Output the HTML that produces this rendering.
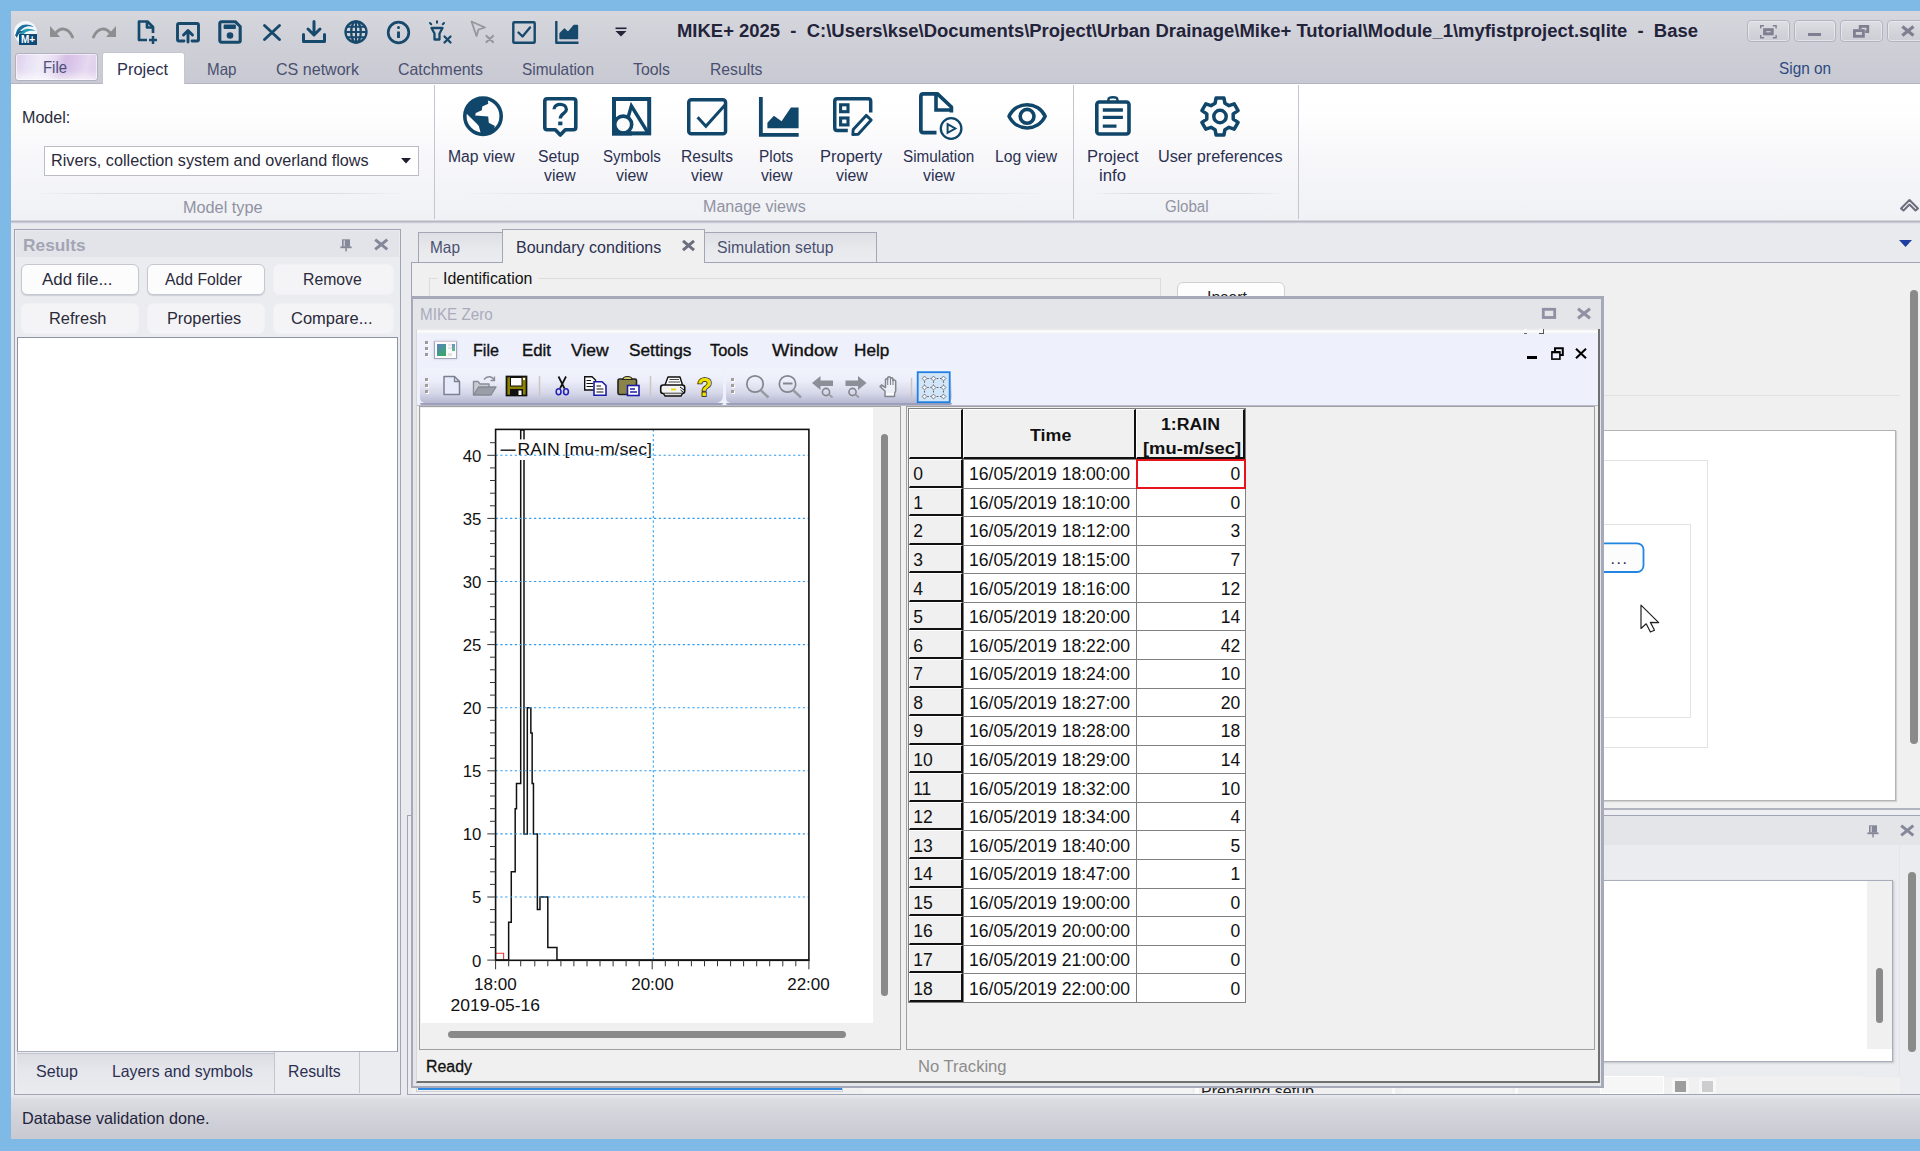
<!DOCTYPE html>
<html>
<head>
<meta charset="utf-8">
<title>MIKE+ 2025</title>
<style>
*{box-sizing:border-box;margin:0;padding:0}
html,body{width:1920px;height:1151px;overflow:hidden}
body{background:#e9eaee;font-family:"Liberation Sans",sans-serif;font-size:16px;color:#2b2b3a;position:relative}
.a{position:absolute}
.t{position:absolute;white-space:nowrap;line-height:1}
svg{position:absolute;overflow:visible}
#titlebar{left:11px;top:11px;width:1909px;height:73px;background:linear-gradient(#d6d7dd 0%,#cfd0d7 45%,#c8c9d2 100%)}
#ribbon{left:11px;top:84px;width:1909px;height:136px;background:linear-gradient(#ffffff 0%,#fefefe 22%,#f7f7fa 55%,#f0f1f5 100%)}
.rtab{color:#4a5070;font-size:16px}
.rlab{font-size:16px;color:#2b3050;text-align:center;line-height:20px;transform:translateX(-50%)}
.rgl{font-size:16px;color:#9092a2;transform:translateX(-50%)}
.btn{position:absolute;height:31px;border:1px solid #c6c8d1;border-radius:6px;background:#fcfcfd;font-size:16px;color:#2a2a3a;text-align:center;line-height:29px;white-space:nowrap;box-shadow:0 1px 1px rgba(120,120,140,.25)}
.btn.dis{border-color:#f1f1f4;background:#f4f4f7;color:#3a3a4a;box-shadow:none}
</style>
</head>
<body>
<div id="titlebar" class="a"></div>
<!-- logo -->
<svg style="left:14px;top:21px" width="24" height="24" viewBox="0 0 24 24">
  <circle cx="11.5" cy="11.5" r="11.5" fill="#f4f7fa"/>
  <path d="M2 12 C4 4 12 1 20 6 C14 4 8 6 5 12 Z" fill="#1b6fa0"/>
  <path d="M5 14 C8 7 15 6 22 10 C16 9 11 10 8 15 Z" fill="#2a9db5"/>
  <path d="M1 14 C3 10 7 9 10 11 C6 11 4 13 3 17 Z" fill="#155c8a"/>
  <rect x="5" y="13" width="18" height="11" fill="#0d4a78"/>
  <text x="14" y="22" font-family="Liberation Sans" font-weight="bold" font-size="10" fill="#fff" text-anchor="middle">M+</text>
</svg>
<!-- undo / redo -->
<svg style="left:50px;top:25px" width="24" height="14" viewBox="0 0 24 14">
  <path d="M0 1 L0 12 L10 12 Z" fill="#8e8e90"/>
  <path d="M5 9 C10 2 18 2 22.5 12" fill="none" stroke="#8e8e90" stroke-width="3" stroke-linecap="round"/>
</svg>
<svg style="left:92px;top:25px" width="24" height="14" viewBox="0 0 24 14">
  <path d="M24 1 L24 12 L14 12 Z" fill="#8e8e90"/>
  <path d="M19 9 C14 2 6 2 1.5 12" fill="none" stroke="#8e8e90" stroke-width="3" stroke-linecap="round"/>
</svg>
<!-- new doc -->
<svg style="left:137px;top:20px" width="22" height="24" viewBox="0 0 22 24" fill="none" stroke="#17496c" stroke-width="2.7" stroke-linejoin="round">
  <path d="M10 20 L2 20 L2 1.5 L10.5 1.5 L16 7 L16 13"/>
  <path d="M10 1.5 L10 7.5 L16 7.5"/>
  <path d="M16 16 L16 24 M12 20 L20 20" stroke-width="2.5"/>
</svg>
<!-- open -->
<svg style="left:176px;top:22px" width="24" height="21" viewBox="0 0 24 21" fill="none" stroke="#17496c" stroke-width="2.9" stroke-linejoin="round" stroke-linecap="round">
  <path d="M8 19 L3 19 Q1.5 19 1.5 17.5 L1.5 3 Q1.5 1.5 3 1.5 L21 1.5 Q22.5 1.5 22.5 3 L22.5 17.5 Q22.5 19 21 19 L16 19"/>
  <path d="M12 20 L12 9 M7.5 13 L12 8.5 L16.5 13"/>
</svg>
<!-- save -->
<svg style="left:218px;top:20px" width="24" height="24" viewBox="0 0 24 24" fill="none" stroke="#17496c" stroke-width="3.1" stroke-linejoin="round">
  <path d="M3 1.8 L17.5 1.8 L22.2 6.5 L22.2 20.5 Q22.2 22.2 20.5 22.2 L3.5 22.2 Q1.8 22.2 1.8 20.5 L1.8 3.5 Q1.8 1.8 3.5 1.8 Z"/>
  <rect x="6.5" y="5.5" width="10.5" height="2.6" fill="#17496c" stroke-width="1.8"/>
  <circle cx="12" cy="15.5" r="3.3" fill="#17496c" stroke="none"/>
</svg>
<!-- X -->
<svg style="left:263px;top:24px" width="18" height="17" viewBox="0 0 18 17" fill="none" stroke="#17496c" stroke-width="2.9" stroke-linecap="round">
  <path d="M1.5 1.5 L16.5 15.5 M16.5 1.5 L1.5 15.5"/>
</svg>
<!-- download -->
<svg style="left:302px;top:20px" width="24" height="23" viewBox="0 0 24 23" fill="none" stroke="#17496c" stroke-width="3.0" stroke-linecap="round" stroke-linejoin="round">
  <path d="M12 1.5 L12 14 M6 9 L12 15 L18 9"/>
  <path d="M1.5 14.5 L1.5 21.5 L22.5 21.5 L22.5 14.5"/>
</svg>
<!-- globe -->
<svg style="left:344px;top:20px" width="24" height="24" viewBox="0 0 24 24" fill="none" stroke="#17496c" stroke-width="2.3">
  <circle cx="12" cy="12" r="10.5"/>
  <ellipse cx="12" cy="12" rx="4.8" ry="10.5"/>
  <path d="M1.5 12 L22.5 12 M12 1.5 L12 22.5 M3 6.8 L21 6.8 M3 17.2 L21 17.2" stroke-width="2"/>
</svg>
<!-- info -->
<svg style="left:387px;top:21px" width="24" height="24" viewBox="0 0 24 24" fill="none" stroke="#17496c" stroke-width="2.7">
  <circle cx="11.5" cy="11.5" r="10.3"/>
  <path d="M11.5 10.5 L11.5 17" stroke-width="2.9"/>
  <circle cx="11.5" cy="6.6" r="1.5" fill="#17496c" stroke="none"/>
</svg>
<!-- highlight x -->
<svg style="left:428px;top:20px" width="25" height="24" viewBox="0 0 25 24" fill="none" stroke="#17496c" stroke-width="2.3" stroke-linecap="round" stroke-linejoin="round">
  <path d="M3.5 8 L14.5 8 L11.5 13.5 L11.5 19.5 L6.5 19.5 L6.5 13.5 Z"/>
  <path d="M9 1.2 L9 2.8 M2 3 L3.2 4.2 M16 3 L14.8 4.2" stroke-width="2.1"/>
  <path d="M16.5 16.5 L22.5 22.5 M22.5 16.5 L16.5 22.5" stroke-width="2.3"/>
</svg>
<!-- cursor x grey -->
<svg style="left:470px;top:20px" width="25" height="24" viewBox="0 0 25 24" fill="none" stroke="#96979d" stroke-width="1.8" stroke-linecap="round" stroke-linejoin="round">
  <path d="M1.5 1.5 L15 7.5 L8.5 9.5 L6.5 16 Z"/>
  <path d="M16.5 16 L23 22 M23 16 L16.5 22" stroke-width="2.2"/>
</svg>
<!-- check -->
<svg style="left:512px;top:21px" width="24" height="23" viewBox="0 0 24 23" fill="none" stroke="#17496c" stroke-width="2.4" stroke-linejoin="round" stroke-linecap="round">
  <rect x="1.3" y="1.3" width="21.4" height="20.4" rx="1"/>
  <path d="M6.5 11.5 L10.5 15.5 L18 6.5"/>
</svg>
<!-- chart -->
<svg style="left:555px;top:21px" width="24" height="23" viewBox="0 0 24 23" fill="none" stroke="#17496c" stroke-width="2.4" stroke-linejoin="round">
  <path d="M1.3 0 L1.3 21.7 L23.5 21.7"/>
  <path d="M5 17.5 L5 12.5 L9.5 8 L13 11.5 L19 4.5 L22.5 4.5 L22.5 17.5 Z" fill="#17496c" stroke-width="1.3"/>
</svg>
<!-- qat dropdown -->
<svg style="left:615px;top:27px" width="12" height="10" viewBox="0 0 12 10">
  <rect x="0.5" y="0.5" width="11" height="1.6" fill="#23233a"/>
  <path d="M0.5 4 L11.5 4 L6 9.5 Z" fill="#23233a"/>
</svg>
<!-- window buttons -->
<div class="a" style="left:1747px;top:20px;width:42.5px;height:22px;border:1px solid #b2b4c0;border-radius:4px;background:linear-gradient(#dedfe4,#d3d4da 55%,#cdced5);box-shadow:inset 0 0 0 1px rgba(235,236,240,.7)"></div>
<div class="a" style="left:1793.5px;top:20px;width:42.5px;height:22px;border:1px solid #b2b4c0;border-radius:4px;background:linear-gradient(#dedfe4,#d3d4da 55%,#cdced5);box-shadow:inset 0 0 0 1px rgba(235,236,240,.7)"></div>
<div class="a" style="left:1840px;top:20px;width:42.5px;height:22px;border:1px solid #b2b4c0;border-radius:4px;background:linear-gradient(#dedfe4,#d3d4da 55%,#cdced5);box-shadow:inset 0 0 0 1px rgba(235,236,240,.7)"></div>
<div class="a" style="left:1886.5px;top:20px;width:42.5px;height:22px;border:1px solid #b2b4c0;border-radius:4px;background:linear-gradient(#dedfe4,#d3d4da 55%,#cdced5);box-shadow:inset 0 0 0 1px rgba(235,236,240,.7)"></div>
<svg style="left:1759.9px;top:24.5px" width="16.8" height="13.5" viewBox="0 0 16.8 13.5" fill="none" stroke="#7e8092">
  <rect x="4.6" y="4.7" width="7.6" height="4.1" stroke-width="3"/>
  <path d="M0.7 3.6 V0.7 H4 M12.8 0.7 H16.1 V3.6 M16.1 9.9 V12.8 H12.8 M4 12.8 H0.7 V9.9" stroke-width="1.4"/>
</svg>
<div class="a" style="left:1808px;top:33.2px;width:13.4px;height:3.2px;background:#7e8092"></div>
<svg style="left:1853.2px;top:25px" width="16.2" height="12.7" viewBox="0 0 16.2 12.7" fill="none" stroke="#7e8092" stroke-width="2.8">
  <path d="M7.2 4 V1.4 H14.8 V6.6 H12.2"/>
  <rect x="1.4" y="5.6" width="9" height="5.7"/>
</svg>
<svg style="left:1900.7px;top:26.1px" width="13.8" height="10.1" viewBox="0 0 13.8 10.1" fill="none" stroke="#7e8092" stroke-width="3.2">
  <path d="M1.3 0.5 L12.5 9.6 M12.5 0.5 L1.3 9.6"/>
</svg>
<!-- ribbon tabs -->
<div class="a" id="tabline" style="left:11px;top:83px;width:1909px;height:1px;background:#b3b5c1"></div>
<div class="a" style="left:15px;top:53px;width:83px;height:28px;border:1px solid #b1b2c0;border-radius:3px;background:linear-gradient(105deg,#dccdea 0%,#e7dff3 14%,#efebf8 30%,#e9e0f3 44%,#d6bfe7 58%,#dcc8ea 70%,#e6d9f0 84%,#d9c6e8 100%);box-shadow:inset 0 0 0 1px rgba(255,255,255,.55),inset 0 -7px 7px -2px rgba(255,255,255,.6)"></div>
<div class="a" style="left:102px;top:52px;width:83px;height:33px;background:#fff;border-radius:3px 3px 0 0;border:1px solid #c5c7d0;border-bottom:none"></div>
<div class="t" style="left:677.0px;top:22.9px;font-size:17.5px;transform:scaleX(1.0544);transform-origin:0 50%;font-weight:bold;color:#23233a">MIKE+ 2025&nbsp; -&nbsp; C:\Users\kse\Documents\Project\Urban Drainage\Mike+ Tutorial\Module_1\myfistproject.sqlite&nbsp; -&nbsp; Base</div>
<div class="t" style="left:42.5px;top:58.6px;font-size:16.5px;transform:scaleX(0.9025);transform-origin:0 50%;color:#4b4f78">File</div>
<div class="t" style="left:117.0px;top:61.0px;font-size:16.5px;transform:scaleX(0.9930);transform-origin:0 50%;color:#2c3050">Project</div>
<div class="t" style="left:207.0px;top:61.0px;font-size:16.5px;transform:scaleX(0.9187);transform-origin:0 50%;color:#4a5070">Map</div>
<div class="t" style="left:275.8px;top:61.0px;font-size:16.5px;transform:scaleX(0.9733);transform-origin:0 50%;color:#4a5070">CS network</div>
<div class="t" style="left:397.5px;top:61.0px;font-size:16.5px;transform:scaleX(0.9654);transform-origin:0 50%;color:#4a5070">Catchments</div>
<div class="t" style="left:522.0px;top:61.0px;font-size:16.5px;transform:scaleX(0.9345);transform-origin:0 50%;color:#4a5070">Simulation</div>
<div class="t" style="left:633.0px;top:61.0px;font-size:16.5px;transform:scaleX(0.9603);transform-origin:0 50%;color:#4a5070">Tools</div>
<div class="t" style="left:709.5px;top:61.0px;font-size:16.5px;transform:scaleX(0.9540);transform-origin:0 50%;color:#4a5070">Results</div>
<div class="t" style="left:1779.0px;top:59.6px;font-size:16.5px;transform:scaleX(0.9291);transform-origin:0 50%;color:#2c4a80">Sign on</div>
<div id="ribbon" class="a"></div>
<div class="a" style="left:11px;top:219.5px;width:1909px;height:4px;background:linear-gradient(#f6f6f9 0%,#abaebb 28%,#c3c5cf 55%,#e2e3e8 85%,#e9eaee 100%)"></div>
<div class="a" style="left:44px;top:146px;width:375px;height:30px;background:#fff;border:1px solid #babcc7"></div>
<svg style="left:401px;top:158px" width="10" height="6" viewBox="0 0 10 6"><path d="M0 0 L10 0 L5 5.5 Z" fill="#1e1e2e"/></svg>
<div class="a" style="left:30px;top:193px;width:380px;height:1px;background:linear-gradient(90deg,rgba(215,217,224,0),#dcdde4 20%,#dcdde4 80%,rgba(215,217,224,0))"></div>
<div class="a" style="left:455px;top:193px;width:600px;height:1px;background:linear-gradient(90deg,rgba(215,217,224,0),#dcdde4 20%,#dcdde4 80%,rgba(215,217,224,0))"></div>
<div class="a" style="left:1090px;top:193px;width:195px;height:1px;background:linear-gradient(90deg,rgba(215,217,224,0),#dcdde4 20%,#dcdde4 80%,rgba(215,217,224,0))"></div>
<div class="a" style="left:434px;top:85px;width:1px;height:134px;background:#c3c5cf"></div>
<div class="a" style="left:1073px;top:85px;width:1px;height:134px;background:#c3c5cf"></div>
<div class="a" style="left:1298px;top:85px;width:1px;height:134px;background:#c3c5cf"></div>
<!-- ribbon icons -->
<!-- map view globe -->
<svg style="left:462.5px;top:96px" width="40" height="40.5" viewBox="0 0 40 40.5">
  <defs><clipPath id="gc"><circle cx="20" cy="20.2" r="17.5"/></clipPath></defs>
  <circle cx="20" cy="20.2" r="18.2" fill="#fdfdfe" stroke="#10466a" stroke-width="3.6"/>
  <path clip-path="url(#gc)" d="M24.3 0 L25.3 7.7 L19.3 10.4 L18.8 14.2 L12.8 17 L12.2 19.6 L25.2 20.4 L25.8 26.8 L31.9 30.1 L30.1 36.5 L26 41 L19.3 41 L17.4 36.1 L15.8 30.1 L14.1 27.9 L4.2 18.2 L0 17.5 L0 0 Z" fill="#10466a"/>
</svg>
<!-- setup view -->
<svg style="left:543.4px;top:96.6px" width="34.6" height="40.4" viewBox="0 0 34.6 40.4" fill="none" stroke="#10466a" stroke-width="3.6" stroke-linejoin="round">
  <path d="M4.3 1.8 L30.3 1.8 Q32.8 1.8 32.8 4.3 L32.8 30.2 Q32.8 32.7 30.3 32.7 L22.3 32.7 L17.3 38 L12.3 32.7 L4.3 32.7 Q1.8 32.7 1.8 30.2 L1.8 4.3 Q1.8 1.8 4.3 1.8 Z"/>
  <path d="M11 12.2 C11 5.8 23.4 5.8 23.4 12.4 C23.4 16.4 17.3 16.6 17.3 21.6" stroke-width="3.3" stroke-linecap="butt"/>
  <rect x="15.2" y="24.6" width="4.2" height="3.7" fill="#10466a" stroke="none"/>
</svg>
<!-- symbols view -->
<svg style="left:612.3px;top:96.8px" width="39.2" height="38.4" viewBox="0 0 39.2 38.4" fill="none" stroke="#10466a" stroke-width="4" stroke-linejoin="miter">
  <rect x="2" y="2" width="35.2" height="34.4"/>
  <path d="M12.5 33 L19.4 9 L35.5 35" stroke-width="3.4" stroke-linejoin="miter"/>
  <circle cx="11.2" cy="27.6" r="8.5" fill="#fbfbfc" stroke-width="3.6"/>
  <path d="M2 17 V36.4 H20" stroke-width="4"/>
</svg>
<!-- results view -->
<svg style="left:687.4px;top:97.9px" width="40.3" height="37.6" viewBox="0 0 40.3 37.6" fill="none" stroke="#10466a" stroke-width="3.5" stroke-linejoin="round">
  <rect x="1.75" y="1.75" width="36.8" height="34.1" rx="2.6"/>
  <path d="M10.6 19.2 L18.9 28.2 L38 6.9" stroke-width="3" stroke-linejoin="miter"/>
</svg>
<!-- plots view -->
<svg style="left:758.6px;top:96.6px" width="39.7" height="40" viewBox="0 0 39.7 40" fill="none" stroke="#10466a">
  <path d="M1.85 0 L1.85 37.9 L39.7 37.9" stroke-width="3.8"/>
  <path d="M8.4 31.3 L8.4 25.8 L14.9 18.7 L22.6 24.2 L31.9 10.4 L39.6 10.4 L39.6 31.3 Z" fill="#10466a" stroke="none"/>
</svg>
<!-- property view -->
<svg style="left:833.2px;top:96.8px" width="40" height="40" viewBox="0 0 40 40" fill="none" stroke="#10466a" stroke-width="3.5" stroke-linejoin="round">
  <path d="M14.8 33.5 L4.3 33.5 Q1.75 33.5 1.75 31 L1.75 4.3 Q1.75 1.75 4.3 1.75 L35.2 1.75 Q37.7 1.75 37.7 4.3 L37.7 15.6" stroke-linecap="butt"/>
  <rect x="7.6" y="7.8" width="7.4" height="6.9" stroke-width="3.1" stroke-linejoin="miter"/>
  <rect x="7.6" y="21" width="7.4" height="6.9" stroke-width="3.1" stroke-linejoin="miter"/>
  <path d="M19.8 37.6 L20.2 32.6 L33.2 18.4 L38.2 23 L25.2 37.2 Z" stroke-width="2.9"/>
</svg>
<!-- simulation view -->
<svg style="left:918.6px;top:92px" width="45" height="48" viewBox="0 0 45 48" fill="none" stroke="#10466a" stroke-width="3.7" stroke-linejoin="round">
  <path d="M17.5 40.6 L4.4 40.6 Q1.85 40.6 1.85 38 L1.85 4.4 Q1.85 1.85 4.4 1.85 L18.5 1.85 L32.4 15 L32.4 20.5" stroke-linecap="butt"/>
  <path d="M17 1.85 L17 18 L33 18" stroke-width="3.6" stroke-linejoin="miter"/>
  <circle cx="32.1" cy="36.5" r="10.3" stroke-width="2.3"/>
  <path d="M28.6 32.2 L36.3 36.5 L28.6 40.8 Z" stroke-width="2" stroke-linejoin="miter"/>
</svg>
<!-- log view eye -->
<svg style="left:1007.2px;top:102.6px" width="40.2" height="26.6" viewBox="0 0 40.2 26.6" fill="none" stroke="#10466a" stroke-width="3.5">
  <path d="M2 13.3 C9.5 -2.2 30.7 -2.2 38.2 13.3 C30.7 28.8 9.5 28.8 2 13.3 Z" stroke-linejoin="round"/>
  <circle cx="20.1" cy="13.3" r="6.9" stroke-width="3.6"/>
</svg>
<!-- project info clipboard -->
<svg style="left:1095.4px;top:96.2px" width="35.8" height="39.8" viewBox="0 0 35.8 39.8" fill="none" stroke="#10466a" stroke-width="3.6" stroke-linejoin="round">
  <rect x="1.8" y="6" width="32.2" height="32" rx="2.6"/>
  <path d="M13.4 6 L13.4 3.4 Q13.4 1.2 17.9 1.2 Q22.4 1.2 22.4 3.4 L22.4 6" stroke-width="2.4"/>
  <path d="M7.8 14 L27.9 14 M7.8 21.3 L27.9 21.3 M7.8 30.1 L21.5 30.1" stroke-width="3.3" stroke-linecap="butt"/>
</svg>
<!-- gear -->
<svg style="left:1200.1px;top:95.8px" width="40" height="41" viewBox="-20 -20.5 40 41" fill="none" stroke="#10466a" stroke-width="3.5" stroke-linejoin="round">
  <path d="M-3.9 -18.6 L3.9 -18.6 L4.9 -13.2 L9 -10.8 L14.2 -12.6 L18.1 -5.9 L13.2 -2.6 L13.2 2.6 L18.1 5.9 L14.2 12.6 L9 10.8 L4.9 13.2 L3.9 18.6 L-3.9 18.6 L-4.9 13.2 L-9 10.8 L-14.2 12.6 L-18.1 5.9 L-13.2 2.6 L-13.2 -2.6 L-18.1 -5.9 L-14.2 -12.6 L-9 -10.8 L-4.9 -13.2 Z"/>
  <circle cx="0" cy="0" r="6.2" stroke-width="3.5"/>
</svg>
<!-- collapse chevron -->
<svg style="left:1900px;top:198px" width="20" height="14" viewBox="0 0 20 14" fill="none" stroke="#6b6d7c" stroke-width="2" stroke-linejoin="round">
  <path d="M1 10.5 L9.5 2 L18 10.5 L15.5 12.5 L9.5 6.5 L3.5 12.5 Z"/>
</svg>
<div class="t" style="left:21.7px;top:109.8px;font-size:16px;transform:scaleX(1.0056);transform-origin:0 50%;color:#2a2a3a">Model:</div>
<div class="t" style="left:50.7px;top:153.2px;font-size:16px;transform:scaleX(1.0118);transform-origin:0 50%;color:#2a2a3a">Rivers, collection system and overland flows</div>
<div class="t" style="left:182.5px;top:199.5px;font-size:16px;transform:scaleX(1.0158);transform-origin:0 50%;color:#9092a2">Model type</div>
<div class="t" style="left:702.7px;top:198.8px;font-size:16px;transform:scaleX(1.0041);transform-origin:0 50%;color:#9092a2">Manage views</div>
<div class="t" style="left:1165.4px;top:198.8px;font-size:16px;transform:scaleX(0.9427);transform-origin:0 50%;color:#9092a2">Global</div>
<div class="t" style="left:448.3px;top:148.7px;font-size:16px;transform:scaleX(0.9840);transform-origin:0 50%;color:#2b3050">Map view</div>
<div class="t" style="left:538.3px;top:148.7px;font-size:16px;transform:scaleX(0.9854);transform-origin:0 50%;color:#2b3050">Setup</div>
<div class="t" style="left:543.7px;top:167.7px;font-size:16px;transform:scaleX(0.9870);transform-origin:0 50%;color:#2b3050">view</div>
<div class="t" style="left:603.0px;top:148.7px;font-size:16px;transform:scaleX(0.9420);transform-origin:0 50%;color:#2b3050">Symbols</div>
<div class="t" style="left:615.6px;top:167.7px;font-size:16px;transform:scaleX(0.9901);transform-origin:0 50%;color:#2b3050">view</div>
<div class="t" style="left:680.8px;top:148.7px;font-size:16px;transform:scaleX(0.9745);transform-origin:0 50%;color:#2b3050">Results</div>
<div class="t" style="left:690.6px;top:167.7px;font-size:16px;transform:scaleX(0.9870);transform-origin:0 50%;color:#2b3050">view</div>
<div class="t" style="left:758.6px;top:148.7px;font-size:16px;transform:scaleX(0.9613);transform-origin:0 50%;color:#2b3050">Plots</div>
<div class="t" style="left:761.0px;top:167.7px;font-size:16px;transform:scaleX(0.9839);transform-origin:0 50%;color:#2b3050">view</div>
<div class="t" style="left:820.3px;top:148.7px;font-size:16px;transform:scaleX(1.0303);transform-origin:0 50%;color:#2b3050">Property</div>
<div class="t" style="left:836.0px;top:167.7px;font-size:16px;transform:scaleX(0.9901);transform-origin:0 50%;color:#2b3050">view</div>
<div class="t" style="left:903.0px;top:148.7px;font-size:16px;transform:scaleX(0.9531);transform-origin:0 50%;color:#2b3050">Simulation</div>
<div class="t" style="left:923.2px;top:167.7px;font-size:16px;transform:scaleX(0.9933);transform-origin:0 50%;color:#2b3050">view</div>
<div class="t" style="left:994.5px;top:148.7px;font-size:16px;transform:scaleX(0.9817);transform-origin:0 50%;color:#2b3050">Log view</div>
<div class="t" style="left:1087.0px;top:148.7px;font-size:16px;transform:scaleX(1.0362);transform-origin:0 50%;color:#2b3050">Project</div>
<div class="t" style="left:1098.8px;top:167.7px;font-size:16px;transform:scaleX(1.0466);transform-origin:0 50%;color:#2b3050">info</div>
<div class="t" style="left:1157.5px;top:148.7px;font-size:16px;transform:scaleX(1.0145);transform-origin:0 50%;color:#2b3050">User preferences</div>
<!-- left Results panel -->
<div class="a" style="left:14px;top:229px;width:387px;height:866px;border:1px solid #a1a4b4;background:#ebecf0"></div>
<div class="a" style="left:16px;top:231px;width:383px;height:26px;background:#e3e4e9"></div>
<!-- pin -->
<svg style="left:340.4px;top:238.5px" width="12" height="13" viewBox="0 0 12 13" fill="#858899">
  <rect x="2" y="0.3" width="8" height="7.4"/><rect x="3.6" y="1.3" width="1.2" height="6" fill="#d9dae0"/><rect x="0.4" y="7.4" width="11.2" height="1.8"/><rect x="5.3" y="9" width="1.5" height="3.4"/>
</svg>
<svg style="left:373.5px;top:238.5px" width="14.5" height="11" viewBox="0 0 14.5 11" fill="none" stroke="#858899" stroke-width="3"><path d="M1.2 0.6 L13.3 10.4 M13.3 0.6 L1.2 10.4"/></svg>
<div class="btn" style="left:21px;top:264px;width:118px"></div>
<div class="btn" style="left:147px;top:264px;width:118px"></div>
<div class="btn dis" style="left:273px;top:264px;width:121px"></div>
<div class="btn dis" style="left:21px;top:303px;width:118px"></div>
<div class="btn dis" style="left:147px;top:303px;width:118px"></div>
<div class="btn dis" style="left:273px;top:303px;width:121px"></div>
<div class="a" style="left:17px;top:337px;width:381px;height:715px;background:#fff;border:1px solid #8f92a3;border-bottom-color:#a9acba"></div>
<!-- bottom tabs -->
<div class="a" style="left:17px;top:1053px;width:258px;height:40px;background:linear-gradient(#dcdde3,#e6e7ec 45%,#eaebef);border-top:1px solid #c2c4ce"></div>
<div class="a" style="left:274px;top:1052px;width:86px;height:41px;background:#ecedf1;border-left:1px solid #c2c4ce;border-right:1px solid #c2c4ce"></div>
<!-- status bar -->
<div class="a" style="left:11px;top:1095px;width:1909px;height:5px;background:linear-gradient(#e8e9ed,#e2e3e8 60%,#d2d3da)"></div>
<div class="a" style="left:11px;top:1099px;width:1909px;height:39.5px;background:linear-gradient(#dcdde2,#d1d2d9 50%,#c8c9d1)"></div>
<div class="t" style="left:23.2px;top:236.7px;font-size:16.5px;transform:scaleX(1.0502);transform-origin:0 50%;font-weight:bold;color:#a3a5b5">Results</div>
<div class="t" style="left:42.0px;top:271.0px;font-size:16.5px;transform:scaleX(1.0248);transform-origin:0 50%;color:#2a2a3a">Add file...</div>
<div class="t" style="left:165.0px;top:271.0px;font-size:16.5px;transform:scaleX(0.9539);transform-origin:0 50%;color:#2a2a3a">Add Folder</div>
<div class="t" style="left:302.5px;top:271.0px;font-size:16.5px;transform:scaleX(0.9552);transform-origin:0 50%;color:#2a2a3a">Remove</div>
<div class="t" style="left:48.7px;top:310.2px;font-size:16.5px;transform:scaleX(0.9951);transform-origin:0 50%;color:#2a2a3a">Refresh</div>
<div class="t" style="left:167.0px;top:310.2px;font-size:16.5px;transform:scaleX(0.9867);transform-origin:0 50%;color:#2a2a3a">Properties</div>
<div class="t" style="left:290.5px;top:310.2px;font-size:16.5px;transform:scaleX(0.9985);transform-origin:0 50%;color:#2a2a3a">Compare...</div>
<div class="t" style="left:35.5px;top:1063.4px;font-size:16.5px;transform:scaleX(0.9739);transform-origin:0 50%;color:#2c3050">Setup</div>
<div class="t" style="left:112.3px;top:1063.4px;font-size:16.5px;transform:scaleX(0.9601);transform-origin:0 50%;color:#2c3050">Layers and symbols</div>
<div class="t" style="left:287.6px;top:1063.4px;font-size:16.5px;transform:scaleX(0.9576);transform-origin:0 50%;color:#2c3050">Results</div>
<div class="t" style="left:22.2px;top:1110.4px;font-size:16.5px;transform:scaleX(0.9826);transform-origin:0 50%;color:#23233a">Database validation done.</div>
<!-- document tab strip + content panel (behind) -->
<div class="a" style="left:411px;top:262px;width:1509px;height:547px;background:#f0f0f0;border:1px solid #a1a4b4;border-right:none"></div>
<div class="a" style="left:407px;top:815px;width:1513px;height:280px;background:#ebecf0;border:1px solid #a1a4b4;border-right:none"></div>
<div class="a" style="left:418px;top:232px;width:85px;height:30px;border:1px solid #a3a6b5;border-bottom:none;background:linear-gradient(#dedfe4,#e9eaee 60%,#ebecef)"></div>
<div class="a" style="left:703px;top:232px;width:174px;height:30px;border:1px solid #a3a6b5;border-bottom:none;background:linear-gradient(#dedfe4,#e9eaee 60%,#ebecef)"></div>
<div class="a" style="left:502px;top:229px;width:203px;height:34px;border:1px solid #a3a6b5;border-bottom:none;background:#f0f0f0"></div>
<svg style="left:681.5px;top:240px" width="13" height="11" viewBox="0 0 13 11" fill="none" stroke="#6d6f80" stroke-width="3"><path d="M1 0.8 L12 10.2 M12 0.8 L1 10.2"/></svg>
<svg style="left:1899px;top:240px" width="13" height="7" viewBox="0 0 13 7"><path d="M0 0 L13 0 L6.5 7 Z" fill="#1f3fa0"/></svg>
<div class="t" style="left:430.0px;top:239.3px;font-size:16.5px;transform:scaleX(0.9343);transform-origin:0 50%;color:#4a5070">Map</div>
<div class="t" style="left:515.7px;top:238.7px;font-size:16.5px;transform:scaleX(0.9718);transform-origin:0 50%;color:#2c3050">Boundary conditions</div>
<div class="t" style="left:716.7px;top:239.3px;font-size:16.5px;transform:scaleX(0.9557);transform-origin:0 50%;color:#4a5070">Simulation setup</div>
<!-- identification groupbox -->
<div class="a" style="left:429px;top:278px;width:732px;height:30px;border:1px solid #dcdcdc;border-bottom:none"></div>
<div class="a" style="left:438px;top:270px;width:100px;height:18px;background:#f0f0f0"></div>
<div class="t" style="left:443.3px;top:270.0px;font-size:16.5px;transform:scaleX(0.9649);transform-origin:0 50%;color:#111">Identification</div>
<div class="a" style="left:1177px;top:282px;width:108px;height:30px;border:1px solid #d0d0d4;border-radius:6px;background:#fdfdfd"></div>
<div class="t" style="left:1207px;top:290px;font-size:16px;color:#222">Insert</div>
<!-- right side content (behind MZ) -->
<div class="a" style="left:1604px;top:395px;width:296px;height:1px;background:#e2e2e4"></div>
<div class="a" style="left:1500px;top:430px;width:396px;height:371px;background:#fff;border:1px solid #b4b4b8;box-shadow:1px 1px 1px rgba(0,0,0,.12)"></div>
<div class="a" style="left:1500px;top:460px;width:208px;height:288px;border:1px solid #e3e3e6"></div>
<div class="a" style="left:1500px;top:524px;width:191px;height:194px;border:1px solid #e3e3e6"></div>
<svg style="left:1550px;top:540px" width="100" height="36" viewBox="0 0 100 36"><rect x="5" y="3.3" width="88.5" height="28.7" rx="6.5" fill="#fcfcfd" stroke="#2285e0" stroke-width="1.8"/></svg>
<div class="t" style="left:1610.5px;top:550.5px;font-size:16px;color:#2a2a4a;letter-spacing:1.6px">...</div>
<!-- mouse cursor -->
<svg style="left:1640.2px;top:604px" width="21" height="31" viewBox="0 0 21 31"><path d="M1 1.1 L1 24.5 L6.2 19.8 L10.4 28 L14.5 26.2 L10.4 18.4 L18.7 18.6 Z" fill="#fff" stroke="#222" stroke-width="1.2" stroke-linejoin="round"/></svg>
<!-- right scrollbar of content -->
<div class="a" style="left:1909.5px;top:290px;width:8px;height:454px;border-radius:4px;background:#8a8a8a"></div>
<!-- splitter + bottom right panel -->
<div class="a" style="left:1500px;top:808px;width:420px;height:2px;background:#b1b3bf"></div>
<div class="a" style="left:1500px;top:810px;width:420px;height:5px;background:#eeeff2"></div>
<div class="a" style="left:1500px;top:816px;width:420px;height:29px;background:#e4e5e9"></div>
<svg style="left:1867.4px;top:824.5px" width="12" height="13" viewBox="0 0 12 13" fill="#858899">
  <rect x="2" y="0.3" width="8" height="7.4"/><rect x="3.6" y="1.3" width="1.2" height="6" fill="#d9dae0"/><rect x="0.4" y="7.4" width="11.2" height="1.8"/><rect x="5.3" y="9" width="1.5" height="3.4"/>
</svg>
<svg style="left:1900px;top:825px" width="14.5" height="11" viewBox="0 0 14.5 11" fill="none" stroke="#858899" stroke-width="3"><path d="M1.2 0.6 L13.3 10.4 M13.3 0.6 L1.2 10.4"/></svg>
<div class="a" style="left:1500px;top:880px;width:393px;height:182px;background:#fff;border:1px solid #a9acba;box-shadow:1px 1px 2px rgba(0,0,0,.18)"></div>
<div class="a" style="left:1867px;top:881px;width:25px;height:168px;background:#f0f0f0"></div>
<div class="a" style="left:1876px;top:968px;width:7px;height:55px;border-radius:3.5px;background:#8a8a8a"></div>
<div class="a" style="left:1908px;top:872px;width:8px;height:180px;border-radius:4px;background:#8a8a8a"></div>
<div class="a" style="left:1899px;top:846px;width:1px;height:248px;background:#e4e5ea"></div>
<!-- bottom strip below MZ -->
<div class="a" style="left:412px;top:1077px;width:1488px;height:17px;background:#f0f0f0"></div>
<div class="a" style="left:416px;top:1085px;width:427px;height:7px;background:#f1f1f3;border:1px solid #d0d0d4;border-top:none"></div>
<div class="a" style="left:418px;top:1088px;width:424px;height:2px;background:#2d89e0"></div>
<div class="a" style="left:862px;top:1086px;width:330px;height:8px;background:#f3f3f4"></div>
<div class="a" style="left:1195px;top:1079px;width:200px;height:14px;overflow:hidden"><div class="t" style="left:6px;top:4.5px;font-size:16px;color:#222">Preparing setup</div></div>
<div class="a" style="left:1195px;top:1086px;width:4px;height:8px;background:#fafafa"></div>
<div class="a" style="left:1392px;top:1086px;width:3px;height:8px;background:#fafafa"></div>
<div class="a" style="left:1402px;top:1086px;width:110px;height:8px;background:#f3f3f4"></div>
<div class="a" style="left:1515px;top:1086px;width:3px;height:8px;background:#fafafa"></div>
<div class="a" style="left:1600px;top:1076px;width:64px;height:18px;background:#f6f6f7;border:1px solid #fff"></div>
<div class="a" style="left:1672px;top:1078px;width:17px;height:16px;background:#f7f7f8;border-radius:3px"></div>
<div class="a" style="left:1675px;top:1081px;width:11px;height:11px;background:#9d9d9f"></div>
<div class="a" style="left:1699px;top:1078px;width:17px;height:16px;background:#f7f7f8;border-radius:3px"></div>
<div class="a" style="left:1702px;top:1081px;width:11px;height:11px;background:#cdcdcf"></div>
<div class="a" style="left:1721px;top:1076px;width:140px;height:18px;background:#f0f0f0"></div>
<style>
.mzm{font-size:16.5px;color:#111}
.th{background:#f0f0f0;border-top:1px solid #fff;border-left:1px solid #fff;border-right:2px solid #111;border-bottom:2px solid #111;font-weight:bold;font-size:17px;color:#111;text-align:center;white-space:nowrap}
.rn{background:#f0f0f0;border-top:1px solid #fff;border-left:1px solid #fff;border-right:2px solid #111;border-bottom:2px solid #111;font-size:17.5px;color:#111;padding-left:4px;white-space:nowrap}
.tc{background:#fff;font-size:17.5px;color:#111;white-space:nowrap}
</style>
<!-- MIKE Zero floating window -->
<div class="a" style="left:411px;top:296px;width:1193px;height:792px;background:#a6a9b8"></div>
<div class="a" style="left:413px;top:299px;width:1188px;height:787px;background:#e4e5e9"></div>
<div class="t" style="left:420.0px;top:306.3px;font-size:16.5px;transform:scaleX(0.9219);transform-origin:0 50%;color:#a9abbd">MIKE Zero</div>
<svg style="left:1542px;top:308px" width="14" height="11" viewBox="0 0 14 11" fill="none" stroke="#8f91a3" stroke-width="2.8"><rect x="1.3" y="1.3" width="11.4" height="8.2"/></svg>
<svg style="left:1577px;top:308px" width="14" height="11" viewBox="0 0 14 11" fill="none" stroke="#8f91a3" stroke-width="3"><path d="M1 0.8 L13 10.2 M13 0.8 L1 10.2"/></svg>
<div class="a" style="left:416px;top:329px;width:1184px;height:754px;background:#f0f0f0;border-right:2px solid #707070;border-bottom:2px solid #707070;border-left:1px solid #d8d8dc"></div>
<div class="a" style="left:417px;top:332px;width:1181px;height:74px;background:#eef0fb"></div>
<div class="a" style="left:417px;top:405px;width:1181px;height:1px;background:#b8bacb"></div>
<div class="a" style="left:417px;top:326px;width:1181px;height:8px;background:linear-gradient(#e3e4e8 0%,#e5e5e9 25%,#ebebed 45%,#ffffff 66%,#f4f4f7 85%,#eef0fb 100%)"></div>
<div class="a" style="left:1524px;top:328.5px;width:3px;height:5.5px;background:#fafafa;border-bottom:1px solid #666"></div>
<div class="a" style="left:1539px;top:328.5px;width:4.5px;height:5.5px;background:#fafafa;border-bottom:1px solid #555;border-right:1px solid #555"></div>
<div class="a" style="left:426px;top:342px;width:3px;height:3px;background:#fff"></div><div class="a" style="left:425px;top:341px;width:3px;height:3px;background:#9a9a9a"></div>
<div class="a" style="left:426px;top:348px;width:3px;height:3px;background:#fff"></div><div class="a" style="left:425px;top:347px;width:3px;height:3px;background:#9a9a9a"></div>
<div class="a" style="left:426px;top:354px;width:3px;height:3px;background:#fff"></div><div class="a" style="left:425px;top:353px;width:3px;height:3px;background:#9a9a9a"></div>
<div class="a" style="left:434px;top:341px;width:23px;height:18px;background:#fbfbfb;border:1px solid #a3a6b6;border-top-color:#d6c4cf;box-shadow:0 0 2px rgba(150,150,190,.5)"></div>
<div class="a" style="left:437px;top:344px;width:9px;height:12px;background:linear-gradient(135deg,#5c7fc0 0%,#4a949a 45%,#32b04e 100%)"></div>
<div class="a" style="left:447.5px;top:344px;width:4.5px;height:2px;background:#e4e4e4"></div><div class="a" style="left:447.5px;top:347px;width:4.5px;height:2px;background:#e4e4e4"></div><div class="a" style="left:447.5px;top:352.5px;width:4.5px;height:3px;background:#e2e2e2"></div>
<div class="a" style="left:452.3px;top:344px;width:2.7px;height:7px;background:linear-gradient(#6a90c8,#58c080)"></div>
<div class="t" style="left:473.3px;top:341.7px;font-size:16.5px;transform:scaleX(0.9777);transform-origin:0 50%;color:#111;-webkit-text-stroke:0.35px #111">File</div>
<div class="t" style="left:521.7px;top:341.7px;font-size:16.5px;transform:scaleX(1.0198);transform-origin:0 50%;color:#111;-webkit-text-stroke:0.35px #111">Edit</div>
<div class="t" style="left:570.7px;top:341.7px;font-size:16.5px;transform:scaleX(1.0601);transform-origin:0 50%;color:#111;-webkit-text-stroke:0.35px #111">View</div>
<div class="t" style="left:629.3px;top:341.7px;font-size:16.5px;transform:scaleX(1.0465);transform-origin:0 50%;color:#111;-webkit-text-stroke:0.35px #111">Settings</div>
<div class="t" style="left:710.0px;top:341.7px;font-size:16.5px;transform:scaleX(0.9940);transform-origin:0 50%;color:#111;-webkit-text-stroke:0.35px #111">Tools</div>
<div class="t" style="left:771.7px;top:341.7px;font-size:16.5px;transform:scaleX(1.1178);transform-origin:0 50%;color:#111;-webkit-text-stroke:0.35px #111">Window</div>
<div class="t" style="left:854.0px;top:341.7px;font-size:16.5px;transform:scaleX(1.0401);transform-origin:0 50%;color:#111;-webkit-text-stroke:0.35px #111">Help</div>
<div class="a" style="left:1527px;top:356px;width:10px;height:3px;background:#000"></div>
<svg style="left:1551px;top:347px" width="13" height="13" viewBox="0 0 13 13" fill="none" stroke="#000" stroke-width="1.6"><path d="M4 4 L4 1.2 L11.8 1.2 L11.8 8 L9 8" stroke-width="2"/><rect x="0.9" y="4.9" width="8" height="7.2" fill="#eef0fb"/><path d="M0.9 5.3 L8.9 5.3" stroke-width="2"/></svg>
<svg style="left:1575px;top:348px" width="12" height="11" viewBox="0 0 12 11" fill="none" stroke="#000" stroke-width="2.1"><path d="M1 0.8 L11 10.2 M11 0.8 L1 10.2"/></svg>
<div class="a" style="left:420px;top:368px;width:303px;height:35px;background:linear-gradient(#f1f3fc 0%,#eceefa 35%,#d7d9ea 70%,#b6b8d2 100%);border-radius:0 6px 6px 0;border-radius:5px 7px 7px 5px"></div>
<div class="a" style="left:726px;top:368px;width:226px;height:35px;background:linear-gradient(#f1f3fc 0%,#eceefa 35%,#d7d9ea 70%,#b6b8d2 100%);border-radius:0 6px 6px 0;border-radius:5px 7px 7px 5px"></div>
<div class="a" style="left:420px;top:403px;width:303px;height:2px;background:#9ea0ba;border-radius:0 0 6px 6px"></div>
<div class="a" style="left:726px;top:403px;width:226px;height:2px;background:#9ea0ba;border-radius:0 0 6px 6px"></div>
<div class="a" style="left:426px;top:379px;width:3px;height:3px;background:#fff"></div><div class="a" style="left:425px;top:378px;width:3px;height:3px;background:#a39d98"></div>
<div class="a" style="left:426px;top:385px;width:3px;height:3px;background:#fff"></div><div class="a" style="left:425px;top:384px;width:3px;height:3px;background:#a39d98"></div>
<div class="a" style="left:426px;top:391px;width:3px;height:3px;background:#fff"></div><div class="a" style="left:425px;top:390px;width:3px;height:3px;background:#a39d98"></div>
<div class="a" style="left:732px;top:379px;width:3px;height:3px;background:#fff"></div><div class="a" style="left:731px;top:378px;width:3px;height:3px;background:#a39d98"></div>
<div class="a" style="left:732px;top:385px;width:3px;height:3px;background:#fff"></div><div class="a" style="left:731px;top:384px;width:3px;height:3px;background:#a39d98"></div>
<div class="a" style="left:732px;top:391px;width:3px;height:3px;background:#fff"></div><div class="a" style="left:731px;top:390px;width:3px;height:3px;background:#a39d98"></div>
<svg style="left:0;top:0" width="1920" height="1151" viewBox="0 0 1920 1151" font-family="Liberation Sans, sans-serif">
<!-- separators -->
<path d="M539.5 376 V396 M650.5 376 V396 M911.5 378 V398" stroke="#c9c6c0" stroke-width="1.4"/>
<!-- new -->
<path d="M444 376.5 H454.5 L459.5 381.5 V394.5 H444 Z" fill="#e6eafa" stroke="#7d8092" stroke-width="1.5" stroke-linejoin="round"/>
<path d="M454.5 376.5 V381.5 H459.5" fill="none" stroke="#7d8092" stroke-width="1.3"/>
<!-- open -->
<path d="M473.5 395 V381.5 H478 L480 384 H489 V387" fill="#c9ccd2" stroke="#8a8e98" stroke-width="1.4" stroke-linejoin="round"/>
<path d="M473.5 395 L478.5 387 H496 L491 395 Z" fill="#9a9ea8" stroke="#858994" stroke-width="1.3" stroke-linejoin="round"/>
<path d="M484 379.5 C487 375.5 492 376 494 380 M494.5 376.5 V380.5 H490.5" fill="none" stroke="#8a8e98" stroke-width="1.3"/>
<!-- save -->
<rect x="506.5" y="376.5" width="20" height="19" fill="#8c8200" stroke="#111" stroke-width="1.7"/>
<rect x="510.5" y="377.5" width="11.5" height="8.5" fill="#fff" stroke="#111" stroke-width="1"/>
<rect x="510" y="389" width="13" height="6.5" fill="#111"/>
<rect x="518.5" y="390.5" width="3" height="4.5" fill="#fff"/>
<rect x="523" y="378" width="2" height="2" fill="#fff"/>
<!-- cut -->
<path d="M558.5 376.5 L564.5 388.5 M566 376.5 L560 388.5" stroke="#111" stroke-width="1.7" fill="none"/>
<ellipse cx="558.6" cy="391.8" rx="2.4" ry="3" fill="none" stroke="#2222b8" stroke-width="1.6"/>
<ellipse cx="566" cy="391.8" rx="2.4" ry="3" fill="none" stroke="#2222b8" stroke-width="1.6"/>
<!-- copy -->
<path d="M584.7 376.7 H592 L595.5 380 V390 H584.7 Z" fill="#fff" stroke="#111" stroke-width="1.4"/>
<path d="M586.5 380.5 H591 M586.5 383.5 H593 M586.5 386.5 H593" stroke="#111" stroke-width="1.2"/>
<path d="M594 381.7 H602 L606 385.5 V395.3 H594 Z" fill="#fff" stroke="#1c1ca8" stroke-width="1.6"/>
<path d="M596.5 386 H601 M596.5 389 H603.5 M596.5 392 H603.5" stroke="#111" stroke-width="1.2"/>
<!-- paste -->
<rect x="618" y="379" width="18.5" height="15.5" rx="1.5" fill="#8a8448" stroke="#222" stroke-width="1.6"/>
<path d="M623 379.5 Q623 376.5 627.5 376.5 Q632 376.5 632 379.5 Z" fill="#d8d060" stroke="#222" stroke-width="1.2"/>
<rect x="627.5" y="385.5" width="11.5" height="10" fill="#fff" stroke="#1c1ca8" stroke-width="1.6"/>
<path d="M630 389 H635 M630 392 H637" stroke="#1c1ca8" stroke-width="1.3"/>
<!-- print -->
<path d="M665 385 L668 377 H680 L682.5 385" fill="#fff" stroke="#111" stroke-width="1.4" stroke-linejoin="round"/>
<path d="M669.5 379.5 H679 M668.5 382 H680" stroke="#444" stroke-width="1"/>
<rect x="660.7" y="385" width="24" height="8.5" rx="2.5" fill="#f4f4f4" stroke="#111" stroke-width="1.6"/>
<path d="M663.5 393.5 L665 396 H681 L682.5 393.5" fill="#ddd" stroke="#111" stroke-width="1.4"/>
<rect x="671" y="388.5" width="5" height="1.8" fill="#e8d800"/>
<path d="M680 387 L684 390 M680.5 390 L683.5 392.5" stroke="#111" stroke-width="1"/>
<!-- help -->
<text x="697" y="396" font-size="25" font-weight="bold" fill="#f0e000" stroke="#111" stroke-width="1.5" paint-order="stroke fill">?</text>
<!-- zoom in -->
<g fill="none" stroke="#84868e" stroke-width="1.7">
<circle cx="755" cy="384" r="8.2"/><path d="M761 390.5 L768.5 397.5" stroke-width="2.6" stroke="#9a9ca4"/>
<circle cx="787.5" cy="384" r="8.2"/><path d="M793.5 390.5 L801 397.5" stroke-width="2.6" stroke="#9a9ca4"/>
<path d="M783 383.5 H792.5" stroke-width="2"/>
</g>
<!-- prev / next zoom arrows -->
<path d="M812 383 L820.5 376 V380.5 H833 V386 H820.5 V390 Z" fill="#8c8e98"/>
<circle cx="826" cy="392" r="3.6" fill="none" stroke="#84868e" stroke-width="1.6"/><path d="M829 394.5 L832.5 397.5" stroke="#9a9ca4" stroke-width="1.8"/>
<path d="M866.5 383 L858 376 V380.5 H845.5 V386 H858 V390 Z" fill="#8c8e98"/>
<circle cx="852.5" cy="392" r="3.6" fill="none" stroke="#84868e" stroke-width="1.6"/><path d="M855.5 394.5 L859 397.5" stroke="#9a9ca4" stroke-width="1.8"/>
<!-- hand -->
<path d="M885 396.5 V391 L880 386.5 L881.5 385 L885.5 387.5 V379.5 Q886.5 378 887.7 379.5 V377.5 Q889 375.8 890.5 377.5 V378.5 Q891.8 377 893 378.7 V380.5 Q894.5 379.3 895.7 381 V391 L894.5 393.5 V396.5 Z" fill="#eef0f8" stroke="#84868e" stroke-width="1.5" stroke-linejoin="round"/>
<path d="M887.7 379.5 V385 M890.5 378 V385 M893 379 V385" stroke="#84868e" stroke-width="1.1"/>
<path d="M886 394 H894" stroke="#fff" stroke-width="1.5"/>
<!-- grid button (selected) -->
<rect x="917.7" y="372.2" width="32" height="30" fill="#d3e6f8" stroke="#1f7fe2" stroke-width="1.8"/>
<g stroke="#5a5e6a" stroke-width="1.1" stroke-dasharray="1.6 1.6" fill="none">
<path d="M924 378.5 H944 M924 387.5 H944 M924 396.5 H944 M924.5 378 V397 M933.5 378 V397 M943.5 378 V397"/>
</g>
<g fill="#f4f6fa" stroke="#6a6e7a" stroke-width="0.9">
<path d="M922.1 378.5 L924.5 376.1 L926.9 378.5 L924.5 380.9 Z"/><path d="M922.1 387.5 L924.5 385.1 L926.9 387.5 L924.5 389.9 Z"/><path d="M922.1 396.5 L924.5 394.1 L926.9 396.5 L924.5 398.9 Z"/><path d="M931.1 378.5 L933.5 376.1 L935.9 378.5 L933.5 380.9 Z"/><path d="M931.1 387.5 L933.5 385.1 L935.9 387.5 L933.5 389.9 Z"/><path d="M931.1 396.5 L933.5 394.1 L935.9 396.5 L933.5 398.9 Z"/><path d="M941.1 378.5 L943.5 376.1 L945.9 378.5 L943.5 380.9 Z"/><path d="M941.1 387.5 L943.5 385.1 L945.9 387.5 L943.5 389.9 Z"/><path d="M941.1 396.5 L943.5 394.1 L945.9 396.5 L943.5 398.9 Z"/></g>
</svg>

<div class="a" style="left:419px;top:406px;width:482px;height:644px;background:#f0f0f0;border:1px solid #a0a0a0"></div>
<div class="a" style="left:421px;top:408px;width:452px;height:615px;background:#fff"></div>
<div class="a" style="left:881px;top:434px;width:7px;height:562px;border-radius:3.5px;background:#8a8a8a"></div>
<div class="a" style="left:448px;top:1031px;width:398px;height:7px;border-radius:3.5px;background:#8a8a8a"></div>
<div class="a" style="left:906px;top:406px;width:689px;height:644px;background:#f0f0f0;border:1px solid #a0a0a0"></div>
<div class="t" style="left:425.8px;top:1059.3px;font-size:16px;transform:scaleX(0.9924);transform-origin:0 50%;color:#111;-webkit-text-stroke:0.3px #111">Ready</div>
<div class="t" style="left:917.7px;top:1059.3px;font-size:16px;transform:scaleX(1.0378);transform-origin:0 50%;color:#8c8c8c">No Tracking</div>
<svg style="left:0;top:0" width="1920" height="1151" viewBox="0 0 1920 1151" font-family="Liberation Sans, sans-serif">
<path d="M495.6 953.3 H503.6 V960.3" fill="none" stroke="#f03838" stroke-width="1.1"/>
<path d="M495.60 960.10 V960.10 H508.65 V922.24 H511.27 V871.76 H515.18 V808.66 H516.49 V783.42 H520.70 V430.06 H524.00 V833.90 H527.30 V707.70 H530.85 V732.94 H532.15 V783.42 H533.46 V833.90 H537.37 V909.62 H539.98 V897.00 H547.82 V947.48 H556.95 V960.10 H573.92 V960.10 H652.25 V960.10 H730.58 V960.10 H808.90" stroke="#111" stroke-width="1.5" fill="none" stroke-linejoin="miter"/>
<rect x="498" y="439.4" width="155" height="20.6" fill="#fff"/>
<path d="M500.6 450.2 H515.6" stroke="#111" stroke-width="1.4"/>
<text x="517.5" y="455.4" font-size="17.2" fill="#111" textLength="134.4" lengthAdjust="spacingAndGlyphs">RAIN [mu-m/sec]</text>
<path d="M495.6 897.0 H808.9 M495.6 833.9 H808.9 M495.6 770.8 H808.9 M495.6 707.7 H808.9 M495.6 644.6 H808.9 M495.6 581.5 H808.9 M495.6 518.4 H808.9 M495.6 455.3 H808.9 M653.3 429.4 V960.3" stroke="#2f9bf0" stroke-width="1.1" stroke-dasharray="2.2 2.6" fill="none"/>
<rect x="495.6" y="429.4" width="313.3" height="530.9" fill="none" stroke="#111" stroke-width="1.6"/>
<path d="M487.3 960.1 H495.6 M490.0 947.5 H495.6 M490.0 934.9 H495.6 M490.0 922.2 H495.6 M490.0 909.6 H495.6 M487.3 897.0 H495.6 M490.0 884.4 H495.6 M490.0 871.8 H495.6 M490.0 859.1 H495.6 M490.0 846.5 H495.6 M487.3 833.9 H495.6 M490.0 821.3 H495.6 M490.0 808.7 H495.6 M490.0 796.0 H495.6 M490.0 783.4 H495.6 M487.3 770.8 H495.6 M490.0 758.2 H495.6 M490.0 745.6 H495.6 M490.0 732.9 H495.6 M490.0 720.3 H495.6 M487.3 707.7 H495.6 M490.0 695.1 H495.6 M490.0 682.5 H495.6 M490.0 669.8 H495.6 M490.0 657.2 H495.6 M487.3 644.6 H495.6 M490.0 632.0 H495.6 M490.0 619.4 H495.6 M490.0 606.7 H495.6 M490.0 594.1 H495.6 M487.3 581.5 H495.6 M490.0 568.9 H495.6 M490.0 556.3 H495.6 M490.0 543.6 H495.6 M490.0 531.0 H495.6 M487.3 518.4 H495.6 M490.0 505.8 H495.6 M490.0 493.2 H495.6 M490.0 480.5 H495.6 M490.0 467.9 H495.6 M487.3 455.3 H495.6 M490.0 442.7 H495.6 M495.6 960.3 V969.3 M508.7 960.3 V966.3 M520.7 960.3 V966.3 M534.8 960.3 V966.3 M547.8 960.3 V966.3 M560.9 960.3 V966.3 M573.9 960.3 V966.3 M587.0 960.3 V966.3 M600.0 960.3 V966.3 M613.1 960.3 V966.3 M626.1 960.3 V966.3 M639.2 960.3 V966.3 M652.2 960.3 V969.3 M665.3 960.3 V966.3 M678.4 960.3 V966.3 M691.4 960.3 V966.3 M704.5 960.3 V966.3 M717.5 960.3 V966.3 M730.6 960.3 V966.3 M743.6 960.3 V966.3 M756.7 960.3 V966.3 M769.7 960.3 V966.3 M782.8 960.3 V966.3 M795.8 960.3 V966.3 M808.9 960.3 V969.3" stroke="#333" stroke-width="1" fill="none"/>
<text x="481.3" y="966.5" font-size="16.8" fill="#111" text-anchor="end">0</text>
<text x="481.3" y="903.4" font-size="16.8" fill="#111" text-anchor="end">5</text>
<text x="481.3" y="840.3" font-size="16.8" fill="#111" text-anchor="end">10</text>
<text x="481.3" y="777.2" font-size="16.8" fill="#111" text-anchor="end">15</text>
<text x="481.3" y="714.1" font-size="16.8" fill="#111" text-anchor="end">20</text>
<text x="481.3" y="651.0" font-size="16.8" fill="#111" text-anchor="end">25</text>
<text x="481.3" y="587.9" font-size="16.8" fill="#111" text-anchor="end">30</text>
<text x="481.3" y="524.8" font-size="16.8" fill="#111" text-anchor="end">35</text>
<text x="481.3" y="461.7" font-size="16.8" fill="#111" text-anchor="end">40</text>
<text x="474.1" y="989.6" font-size="17" fill="#111" textLength="42.6" lengthAdjust="spacingAndGlyphs">18:00</text>
<text x="631.2" y="989.6" font-size="17" fill="#111" textLength="42.6" lengthAdjust="spacingAndGlyphs">20:00</text>
<text x="787.2" y="989.6" font-size="17" fill="#111" textLength="42.6" lengthAdjust="spacingAndGlyphs">22:00</text>
<text x="450.6" y="1010.8" font-size="17" fill="#111" textLength="89.5" lengthAdjust="spacingAndGlyphs">2019-05-16</text>
</svg>
<div class="a" style="left:908px;top:408px;width:338px;height:595px;background:#808080"></div>
<div class="a th" style="left:909px;top:409px;width:54px;height:50px"></div>
<div class="a th" style="left:963px;top:409px;width:173px;height:50px"></div>
<div class="a th" style="left:1136px;top:409px;width:109px;height:50px"></div>
<div class="t" style="left:1030.1px;top:426.7px;font-size:17.2px;transform:scaleX(1.0374);transform-origin:0 50%;font-weight:bold;color:#111">Time</div>
<div class="t" style="left:1161.0px;top:416.3px;font-size:17.2px;transform:scaleX(1.0297);transform-origin:0 50%;font-weight:bold;color:#111">1:RAIN</div>
<div class="t" style="left:1143.4px;top:440.0px;font-size:17.2px;transform:scaleX(1.0688);transform-origin:0 50%;font-weight:bold;color:#111">[mu-m/sec]</div>
<div class="a rn" style="left:909px;top:459px;width:54px;height:29px"></div>
<div class="a tc" style="left:964px;top:460px;width:172px;height:28px"></div>
<div class="a tc" style="left:1137px;top:460px;width:108px;height:28px"></div>
<div class="t" style="left:913.2px;top:466.2px;font-size:17.5px;color:#111">0</div>
<div class="t" style="left:969.2px;top:466.3px;font-size:17.5px;transform:scaleX(1.0026);transform-origin:0 50%;color:#111">16/05/2019 18:00:00</div>
<div class="t" style="right:679.7px;top:466.3px;font-size:17.5px;color:#111">0</div>
<div class="a rn" style="left:909px;top:488px;width:54px;height:28px"></div>
<div class="a tc" style="left:964px;top:489px;width:172px;height:27px"></div>
<div class="a tc" style="left:1137px;top:489px;width:108px;height:27px"></div>
<div class="t" style="left:913.2px;top:494.8px;font-size:17.5px;color:#111">1</div>
<div class="t" style="left:969.2px;top:494.9px;font-size:17.5px;transform:scaleX(1.0026);transform-origin:0 50%;color:#111">16/05/2019 18:10:00</div>
<div class="t" style="right:679.7px;top:494.9px;font-size:17.5px;color:#111">0</div>
<div class="a rn" style="left:909px;top:516px;width:54px;height:29px"></div>
<div class="a tc" style="left:964px;top:517px;width:172px;height:28px"></div>
<div class="a tc" style="left:1137px;top:517px;width:108px;height:28px"></div>
<div class="t" style="left:913.2px;top:523.3px;font-size:17.5px;color:#111">2</div>
<div class="t" style="left:969.2px;top:523.4px;font-size:17.5px;transform:scaleX(1.0026);transform-origin:0 50%;color:#111">16/05/2019 18:12:00</div>
<div class="t" style="right:679.7px;top:523.4px;font-size:17.5px;color:#111">3</div>
<div class="a rn" style="left:909px;top:545px;width:54px;height:28px"></div>
<div class="a tc" style="left:964px;top:546px;width:172px;height:27px"></div>
<div class="a tc" style="left:1137px;top:546px;width:108px;height:27px"></div>
<div class="t" style="left:913.2px;top:551.9px;font-size:17.5px;color:#111">3</div>
<div class="t" style="left:969.2px;top:552.0px;font-size:17.5px;transform:scaleX(1.0026);transform-origin:0 50%;color:#111">16/05/2019 18:15:00</div>
<div class="t" style="right:679.7px;top:552.0px;font-size:17.5px;color:#111">7</div>
<div class="a rn" style="left:909px;top:573px;width:54px;height:29px"></div>
<div class="a tc" style="left:964px;top:574px;width:172px;height:28px"></div>
<div class="a tc" style="left:1137px;top:574px;width:108px;height:28px"></div>
<div class="t" style="left:913.2px;top:580.5px;font-size:17.5px;color:#111">4</div>
<div class="t" style="left:969.2px;top:580.6px;font-size:17.5px;transform:scaleX(1.0026);transform-origin:0 50%;color:#111">16/05/2019 18:16:00</div>
<div class="t" style="right:679.7px;top:580.6px;font-size:17.5px;color:#111">12</div>
<div class="a rn" style="left:909px;top:602px;width:54px;height:28px"></div>
<div class="a tc" style="left:964px;top:603px;width:172px;height:27px"></div>
<div class="a tc" style="left:1137px;top:603px;width:108px;height:27px"></div>
<div class="t" style="left:913.2px;top:609.1px;font-size:17.5px;color:#111">5</div>
<div class="t" style="left:969.2px;top:609.2px;font-size:17.5px;transform:scaleX(1.0026);transform-origin:0 50%;color:#111">16/05/2019 18:20:00</div>
<div class="t" style="right:679.7px;top:609.2px;font-size:17.5px;color:#111">14</div>
<div class="a rn" style="left:909px;top:630px;width:54px;height:29px"></div>
<div class="a tc" style="left:964px;top:631px;width:172px;height:28px"></div>
<div class="a tc" style="left:1137px;top:631px;width:108px;height:28px"></div>
<div class="t" style="left:913.2px;top:637.6px;font-size:17.5px;color:#111">6</div>
<div class="t" style="left:969.2px;top:637.7px;font-size:17.5px;transform:scaleX(1.0026);transform-origin:0 50%;color:#111">16/05/2019 18:22:00</div>
<div class="t" style="right:679.7px;top:637.7px;font-size:17.5px;color:#111">42</div>
<div class="a rn" style="left:909px;top:659px;width:54px;height:29px"></div>
<div class="a tc" style="left:964px;top:660px;width:172px;height:28px"></div>
<div class="a tc" style="left:1137px;top:660px;width:108px;height:28px"></div>
<div class="t" style="left:913.2px;top:666.2px;font-size:17.5px;color:#111">7</div>
<div class="t" style="left:969.2px;top:666.3px;font-size:17.5px;transform:scaleX(1.0026);transform-origin:0 50%;color:#111">16/05/2019 18:24:00</div>
<div class="t" style="right:679.7px;top:666.3px;font-size:17.5px;color:#111">10</div>
<div class="a rn" style="left:909px;top:688px;width:54px;height:28px"></div>
<div class="a tc" style="left:964px;top:689px;width:172px;height:27px"></div>
<div class="a tc" style="left:1137px;top:689px;width:108px;height:27px"></div>
<div class="t" style="left:913.2px;top:694.8px;font-size:17.5px;color:#111">8</div>
<div class="t" style="left:969.2px;top:694.9px;font-size:17.5px;transform:scaleX(1.0026);transform-origin:0 50%;color:#111">16/05/2019 18:27:00</div>
<div class="t" style="right:679.7px;top:694.9px;font-size:17.5px;color:#111">20</div>
<div class="a rn" style="left:909px;top:716px;width:54px;height:29px"></div>
<div class="a tc" style="left:964px;top:717px;width:172px;height:28px"></div>
<div class="a tc" style="left:1137px;top:717px;width:108px;height:28px"></div>
<div class="t" style="left:913.2px;top:723.3px;font-size:17.5px;color:#111">9</div>
<div class="t" style="left:969.2px;top:723.4px;font-size:17.5px;transform:scaleX(1.0026);transform-origin:0 50%;color:#111">16/05/2019 18:28:00</div>
<div class="t" style="right:679.7px;top:723.4px;font-size:17.5px;color:#111">18</div>
<div class="a rn" style="left:909px;top:745px;width:54px;height:28px"></div>
<div class="a tc" style="left:964px;top:746px;width:172px;height:27px"></div>
<div class="a tc" style="left:1137px;top:746px;width:108px;height:27px"></div>
<div class="t" style="left:913.2px;top:751.9px;font-size:17.5px;color:#111">10</div>
<div class="t" style="left:969.2px;top:752.0px;font-size:17.5px;transform:scaleX(1.0026);transform-origin:0 50%;color:#111">16/05/2019 18:29:00</div>
<div class="t" style="right:679.7px;top:752.0px;font-size:17.5px;color:#111">14</div>
<div class="a rn" style="left:909px;top:773px;width:54px;height:29px"></div>
<div class="a tc" style="left:964px;top:774px;width:172px;height:28px"></div>
<div class="a tc" style="left:1137px;top:774px;width:108px;height:28px"></div>
<div class="t" style="left:913.2px;top:780.5px;font-size:17.5px;color:#111">11</div>
<div class="t" style="left:969.2px;top:780.6px;font-size:17.5px;transform:scaleX(1.0026);transform-origin:0 50%;color:#111">16/05/2019 18:32:00</div>
<div class="t" style="right:679.7px;top:780.6px;font-size:17.5px;color:#111">10</div>
<div class="a rn" style="left:909px;top:802px;width:54px;height:28px"></div>
<div class="a tc" style="left:964px;top:803px;width:172px;height:27px"></div>
<div class="a tc" style="left:1137px;top:803px;width:108px;height:27px"></div>
<div class="t" style="left:913.2px;top:809.0px;font-size:17.5px;color:#111">12</div>
<div class="t" style="left:969.2px;top:809.1px;font-size:17.5px;transform:scaleX(1.0026);transform-origin:0 50%;color:#111">16/05/2019 18:34:00</div>
<div class="t" style="right:679.7px;top:809.1px;font-size:17.5px;color:#111">4</div>
<div class="a rn" style="left:909px;top:830px;width:54px;height:29px"></div>
<div class="a tc" style="left:964px;top:831px;width:172px;height:28px"></div>
<div class="a tc" style="left:1137px;top:831px;width:108px;height:28px"></div>
<div class="t" style="left:913.2px;top:837.6px;font-size:17.5px;color:#111">13</div>
<div class="t" style="left:969.2px;top:837.7px;font-size:17.5px;transform:scaleX(1.0026);transform-origin:0 50%;color:#111">16/05/2019 18:40:00</div>
<div class="t" style="right:679.7px;top:837.7px;font-size:17.5px;color:#111">5</div>
<div class="a rn" style="left:909px;top:859px;width:54px;height:29px"></div>
<div class="a tc" style="left:964px;top:860px;width:172px;height:28px"></div>
<div class="a tc" style="left:1137px;top:860px;width:108px;height:28px"></div>
<div class="t" style="left:913.2px;top:866.2px;font-size:17.5px;color:#111">14</div>
<div class="t" style="left:969.2px;top:866.3px;font-size:17.5px;transform:scaleX(1.0026);transform-origin:0 50%;color:#111">16/05/2019 18:47:00</div>
<div class="t" style="right:679.7px;top:866.3px;font-size:17.5px;color:#111">1</div>
<div class="a rn" style="left:909px;top:888px;width:54px;height:28px"></div>
<div class="a tc" style="left:964px;top:889px;width:172px;height:27px"></div>
<div class="a tc" style="left:1137px;top:889px;width:108px;height:27px"></div>
<div class="t" style="left:913.2px;top:894.7px;font-size:17.5px;color:#111">15</div>
<div class="t" style="left:969.2px;top:894.8px;font-size:17.5px;transform:scaleX(1.0026);transform-origin:0 50%;color:#111">16/05/2019 19:00:00</div>
<div class="t" style="right:679.7px;top:894.8px;font-size:17.5px;color:#111">0</div>
<div class="a rn" style="left:909px;top:916px;width:54px;height:29px"></div>
<div class="a tc" style="left:964px;top:917px;width:172px;height:28px"></div>
<div class="a tc" style="left:1137px;top:917px;width:108px;height:28px"></div>
<div class="t" style="left:913.2px;top:923.3px;font-size:17.5px;color:#111">16</div>
<div class="t" style="left:969.2px;top:923.4px;font-size:17.5px;transform:scaleX(1.0026);transform-origin:0 50%;color:#111">16/05/2019 20:00:00</div>
<div class="t" style="right:679.7px;top:923.4px;font-size:17.5px;color:#111">0</div>
<div class="a rn" style="left:909px;top:945px;width:54px;height:28px"></div>
<div class="a tc" style="left:964px;top:946px;width:172px;height:27px"></div>
<div class="a tc" style="left:1137px;top:946px;width:108px;height:27px"></div>
<div class="t" style="left:913.2px;top:951.9px;font-size:17.5px;color:#111">17</div>
<div class="t" style="left:969.2px;top:952.0px;font-size:17.5px;transform:scaleX(1.0026);transform-origin:0 50%;color:#111">16/05/2019 21:00:00</div>
<div class="t" style="right:679.7px;top:952.0px;font-size:17.5px;color:#111">0</div>
<div class="a rn" style="left:909px;top:973px;width:54px;height:29px"></div>
<div class="a tc" style="left:964px;top:974px;width:172px;height:28px"></div>
<div class="a tc" style="left:1137px;top:974px;width:108px;height:28px"></div>
<div class="t" style="left:913.2px;top:980.5px;font-size:17.5px;color:#111">18</div>
<div class="t" style="left:969.2px;top:980.6px;font-size:17.5px;transform:scaleX(1.0026);transform-origin:0 50%;color:#111">16/05/2019 22:00:00</div>
<div class="t" style="right:679.7px;top:980.6px;font-size:17.5px;color:#111">0</div>
<div class="a" style="left:1136px;top:459px;width:110px;height:30px;border:2px solid #e8141c"></div>
<!-- blue desktop borders -->
<div class="a" style="left:0;top:0;width:1920px;height:11px;background:#7fbae7"></div>
<div class="a" style="left:0;top:0;width:11px;height:1151px;background:#7fbae7"></div>
<div class="a" style="left:0;top:1138.5px;width:1920px;height:13px;background:#7fbae7"></div>
</body>
</html>
